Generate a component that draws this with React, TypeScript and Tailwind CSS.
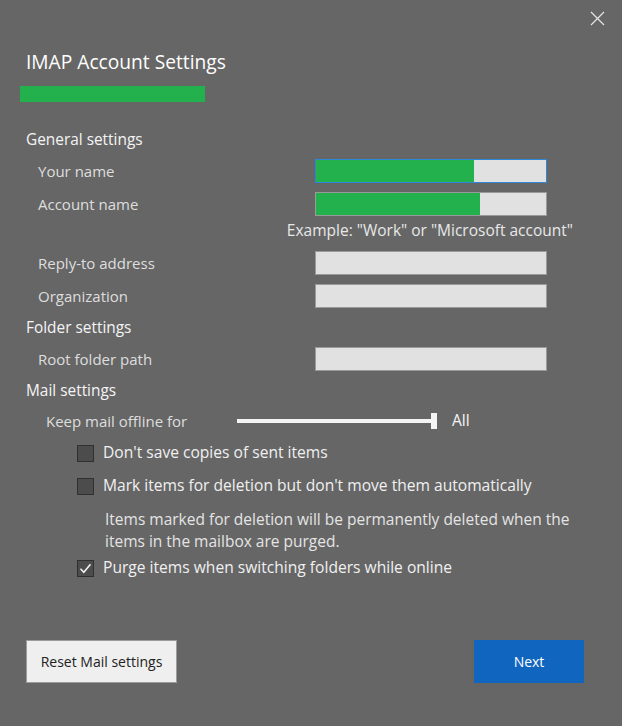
import { ReactNode } from "react";

const font = "font-['Open_Sans','Noto_Sans',sans-serif]";

function Field({ label, fill, focused }: { label: string; fill?: number; focused?: boolean }) {
  return (
    <div className="flex items-center h-[24px]">
      <div className="w-[289px] pl-[12px] text-[15px] text-[#dedede]">{label}</div>
      <div
        className={`w-[232px] h-[24px] bg-[#e1e1e1] border flex ${
          focused ? "border-[#2b88d8]" : "border-[#9a9a9a]"
        }`}
      >
        {fill ? <div className="h-full bg-[#22b14c]" style={{ width: fill }} /> : null}
      </div>
    </div>
  );
}

function Heading({ children }: { children: ReactNode }) {
  return <div className="h-[24px] flex items-center text-[15.4px] text-[#f4f4f4]">{children}</div>;
}

function Check({ label, checked }: { label: string; checked?: boolean }) {
  return (
    <div className="flex items-center h-[24px] pl-[51px] gap-[9px]">
      <div className="w-[17px] h-[17px] bg-[#4c4c4c] border border-[#303030] flex items-center justify-center">
        {checked ? (
          <svg width="13" height="13" viewBox="0 0 13 13" fill="none">
            <path d="M1.5 6.8 L4.8 10.2 L11.5 2.2" stroke="#f2f2f2" strokeWidth="1.6" />
          </svg>
        ) : null}
      </div>
      <span className="text-[15.6px] text-[#f0f0f0]">{label}</span>
    </div>
  );
}

export default function App() {
  return (
    <div className={`relative w-[622px] h-[726px] bg-[#666666] ${font}`}>
      {/* close */}
      <button className="absolute top-[11px] left-[590px] w-[15px] h-[15px]">
        <svg width="15" height="15" viewBox="0 0 15 15">
          <path d="M1 1 L14 14 M14 1 L1 14" stroke="#e6e6e6" strokeWidth="1.2" />
        </svg>
      </button>

      <div className="flex flex-col px-[26px] pt-[49px]">
        <div className="h-[26px] leading-[26px] text-[19.2px] text-white">IMAP Account Settings</div>
        <div className="mt-[11px] -ml-[6px] w-[185px] h-[16px] bg-[#22b14c]" />

        <div className="mt-[26px]">
          <Heading>General settings</Heading>
        </div>
        <div className="mt-[7px]">
          <Field label="Your name" fill={158} focused />
        </div>
        <div className="mt-[9px]">
          <Field label="Account name" fill={164} />
        </div>
        <div className="mt-[5px] h-[20px] flex items-center justify-end pr-[23px] text-[15.5px] text-[#e8e8e8] whitespace-nowrap">
          Example: "Work" or "Microsoft account"
        </div>
        <div className="mt-[10px]">
          <Field label="Reply-to address" />
        </div>
        <div className="mt-[9px]">
          <Field label="Organization" />
        </div>
        <div className="mt-[8px]">
          <Heading>Folder settings</Heading>
        </div>
        <div className="mt-[7px]">
          <Field label="Root folder path" />
        </div>
        <div className="mt-[8px]">
          <Heading>Mail settings</Heading>
        </div>

        <div className="mt-[6px] h-[24px] flex items-center">
          <div className="w-[211px] pl-[20px] text-[15px] text-[#dedede]">Keep mail offline for</div>
          <div className="relative w-[200px] h-[16px] flex items-center">
            <div className="w-[196px] h-[4px] bg-[#f4f4f4]" />
            <div className="absolute left-[194px] top-0 w-[6px] h-[16px] bg-[#f4f4f4]" />
          </div>
          <div className="ml-[15px] text-[15.6px] text-[#f4f4f4]">All</div>
        </div>

        <div className="mt-[8px]">
          <Check label="Don't save copies of sent items" />
        </div>
        <div className="mt-[9px]">
          <Check label="Mark items for deletion but don't move them automatically" />
        </div>
        <div className="mt-[10px] pl-[79px] pr-[4px] text-[15.5px] leading-[22px] text-[#e4e4e4]">
          Items marked for deletion will be permanently deleted when the items in the mailbox are purged.
        </div>
        <div className="mt-[4px]">
          <Check label="Purge items when switching folders while online" checked />
        </div>

        <div className="mt-[60px] flex justify-between pr-[12px]">
          <button className="w-[151px] h-[43px] bg-[#efefef] border border-[#9c9c9c] text-[14px] text-[#222222]">
            Reset Mail settings
          </button>
          <button className="w-[110px] h-[43px] bg-[#1066be] text-[14px] text-white">Next</button>
        </div>
      </div>
    </div>
  );
}
